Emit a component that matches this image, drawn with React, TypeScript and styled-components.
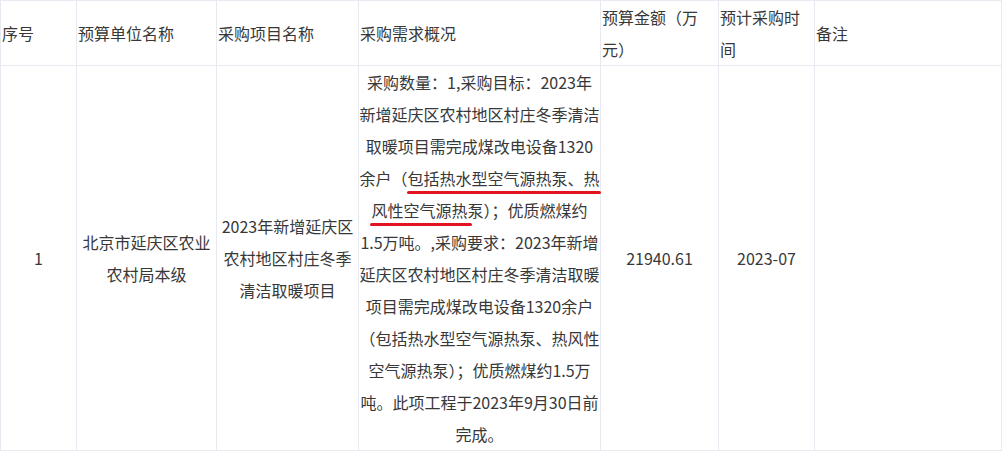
import React from "react";
import styled, { createGlobalStyle } from "styled-components";

const Global = createGlobalStyle`
  html, body { margin: 0; padding: 0; background: #ffffff; }
  body { font-family: "Noto Sans CJK SC", "Noto Sans", sans-serif; }
`;

const Table = styled.table`
  border-collapse: collapse;
  table-layout: fixed;
  width: 1001px;
  font-size: 16px;
  line-height: 32px;
  color: #383838;
`;

const HeadCell = styled.th`
  border: 1px solid #e9e9f1;
  padding: 0 1px;
  font-weight: normal;
  text-align: left;
  vertical-align: middle;
  height: 64px;
`;

const Cell = styled.td<{ $lines?: boolean }>`
  border: 1px solid #e9e9f1;
  padding: 0 ${(p) => (p.$lines ? 0 : 1)}px;
  text-align: center;
  vertical-align: middle;
  white-space: ${(p) => (p.$lines ? "nowrap" : "normal")};
  overflow: visible;
`;

const Mark = styled.span<{ $cut: number }>`
  position: relative;
  &::after {
    content: "";
    position: absolute;
    left: -1px;
    right: ${(p) => p.$cut}px;
    bottom: -4px;
    height: 3px;
    border-radius: 2px;
    background: #e2141f;
  }
`;

const widths = [76, 140, 142, 242, 118, 96, 187];
const heads = ["序号", "预算单位名称", "采购项目名称", "采购需求概况", "预算金额（万元）", "预计采购时间", "备注"];

export default function App() {
  return (
    <>
      <Global />
      <Table>
        <colgroup>
          {widths.map((w, i) => (
            <col key={i} style={{ width: w }} />
          ))}
        </colgroup>
        <thead>
          <tr>
            {heads.map((h) => (
              <HeadCell key={h}>{h}</HeadCell>
            ))}
          </tr>
        </thead>
        <tbody>
          <tr>
            <Cell>1</Cell>
            <Cell>北京市延庆区农业农村局本级</Cell>
            <Cell>2023年新增延庆区农村地区村庄冬季清洁取暖项目</Cell>
            <Cell $lines>
              采购数量：1,采购目标：2023年
              <br />
              新增延庆区农村地区村庄冬季清洁
              <br />
              取暖项目需完成煤改电设备1320
              <br />
              余户（<Mark $cut={-1}>包括热水型空气源热泵、热</Mark>
              <br />
              <Mark $cut={12}>风性空气源热泵</Mark>）；优质燃煤约
              <br />
              1.5万吨。,采购要求：2023年新增
              <br />
              延庆区农村地区村庄冬季清洁取暖
              <br />
              项目需完成煤改电设备1320余户
              <br />
              （包括热水型空气源热泵、热风性
              <br />
              空气源热泵）；优质燃煤约1.5万
              <br />
              吨。此项工程于2023年9月30日前
              <br />
              完成。
            </Cell>
            <Cell>21940.61</Cell>
            <Cell>2023-07</Cell>
            <Cell></Cell>
          </tr>
        </tbody>
      </Table>
    </>
  );
}
